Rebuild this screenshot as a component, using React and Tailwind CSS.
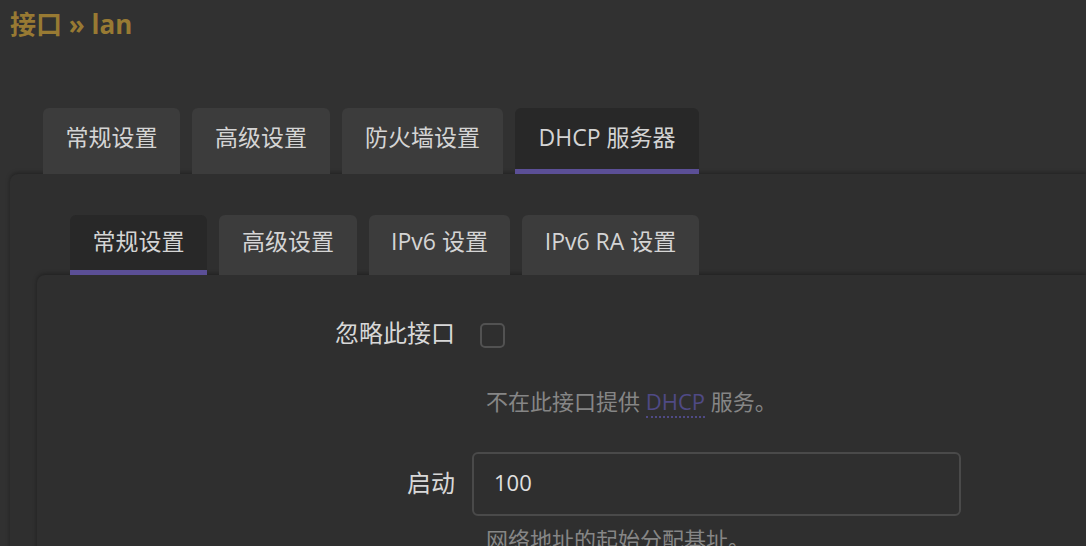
const FONT = { fontFamily: '"Open Sans", "Noto Sans CJK SC", sans-serif' }

const TOP_TABS = [
  { label: '常规设置', w: 'w-[137px]' },
  { label: '高级设置', w: 'w-[138px]' },
  { label: '防火墙设置', w: 'w-[161px]' },
  { label: 'DHCP 服务器', w: 'w-[184px]', active: true },
]

const SUB_TABS = [
  { label: '常规设置', w: 'w-[137px]', active: true },
  { label: '高级设置', w: 'w-[138px]' },
  { label: 'IPv6 设置', w: 'w-[141px]' },
  { label: 'IPv6 RA 设置', w: 'w-[177px]' },
]

function Tab({ label, w, active, h }) {
  return (
    <div
      className={`${w} ${h} flex flex-col rounded-t-[6px] overflow-hidden ${
        active ? 'bg-[#282828]' : 'bg-[#3c3c3c]'
      }`}
    >
      <div className="flex-1 flex items-center justify-center text-[23px] text-[#d4d4d4] pb-[3px]">
        {label}
      </div>
      <div className={`h-[5px] ${active ? 'bg-[#5b4f96]' : ''}`} />
    </div>
  )
}

export default function App() {
  return (
    <div className="min-h-screen bg-[#313131] overflow-hidden" style={FONT}>
      {/* Title */}
      <h2 className="pl-[10px] pt-[5px] h-[108px] text-[26px] font-bold text-[#987a33] leading-[38px]">
        接口 » lan
      </h2>

      {/* Top tabs */}
      <div className="flex gap-[12px] pl-[43px]">
        {TOP_TABS.map(t => (
          <Tab key={t.label} {...t} h="h-[66px]" />
        ))}
      </div>

      {/* Outer panel */}
      <div className="ml-[10px] bg-[#2f2f2f] rounded-tl-[8px] shadow-[0_-1px_4px_rgba(0,0,0,0.35)] pt-[41px] min-h-[400px]">
        <div className="flex gap-[12px] pl-[60px]">
          {SUB_TABS.map(t => (
            <Tab key={t.label} {...t} h="h-[60px]" />
          ))}
        </div>

        {/* Inner panel */}
        <div className="ml-[27px] bg-[#2f2f2f] rounded-tl-[8px] shadow-[0_-1px_4px_rgba(0,0,0,0.35)] pt-[45px] min-h-[300px]">
          {/* Ignore interface */}
          <div className="flex items-center h-[30px]">
            <div className="w-[418px] text-right text-[24px] text-[#d8d8d8] leading-[30px] -mt-[5px]">忽略此接口</div>
            <div className="ml-[25px] w-[25px] h-[25px] rounded-[5px] border-2 border-[#525252]" />
          </div>
          <div className="pl-[449px] mt-[36px] text-[22px] text-[#868686] leading-[30px]">
            不在此接口提供{' '}
            <span className="text-[#4f4a85] border-b-2 border-dotted border-[#4f4a85]">DHCP</span>{' '}
            服务。
          </div>

          {/* Start */}
          <div className="flex items-center mt-[36px]">
            <div className="w-[418px] text-right text-[24px] text-[#d8d8d8] leading-[30px] -mt-[3px]">启动</div>
            <div className="ml-[17px] w-[489px] h-[64px] rounded-[6px] border-2 border-[#4a4a4a] flex items-center pl-[20px] pb-[4px] text-[22px] text-[#e0e0e0]">
              100
            </div>
          </div>
          <div className="pl-[449px] mt-[8px] text-[22px] text-[#868686] leading-[30px]">
            网络地址的起始分配基址。
          </div>
        </div>
      </div>
    </div>
  )
}
